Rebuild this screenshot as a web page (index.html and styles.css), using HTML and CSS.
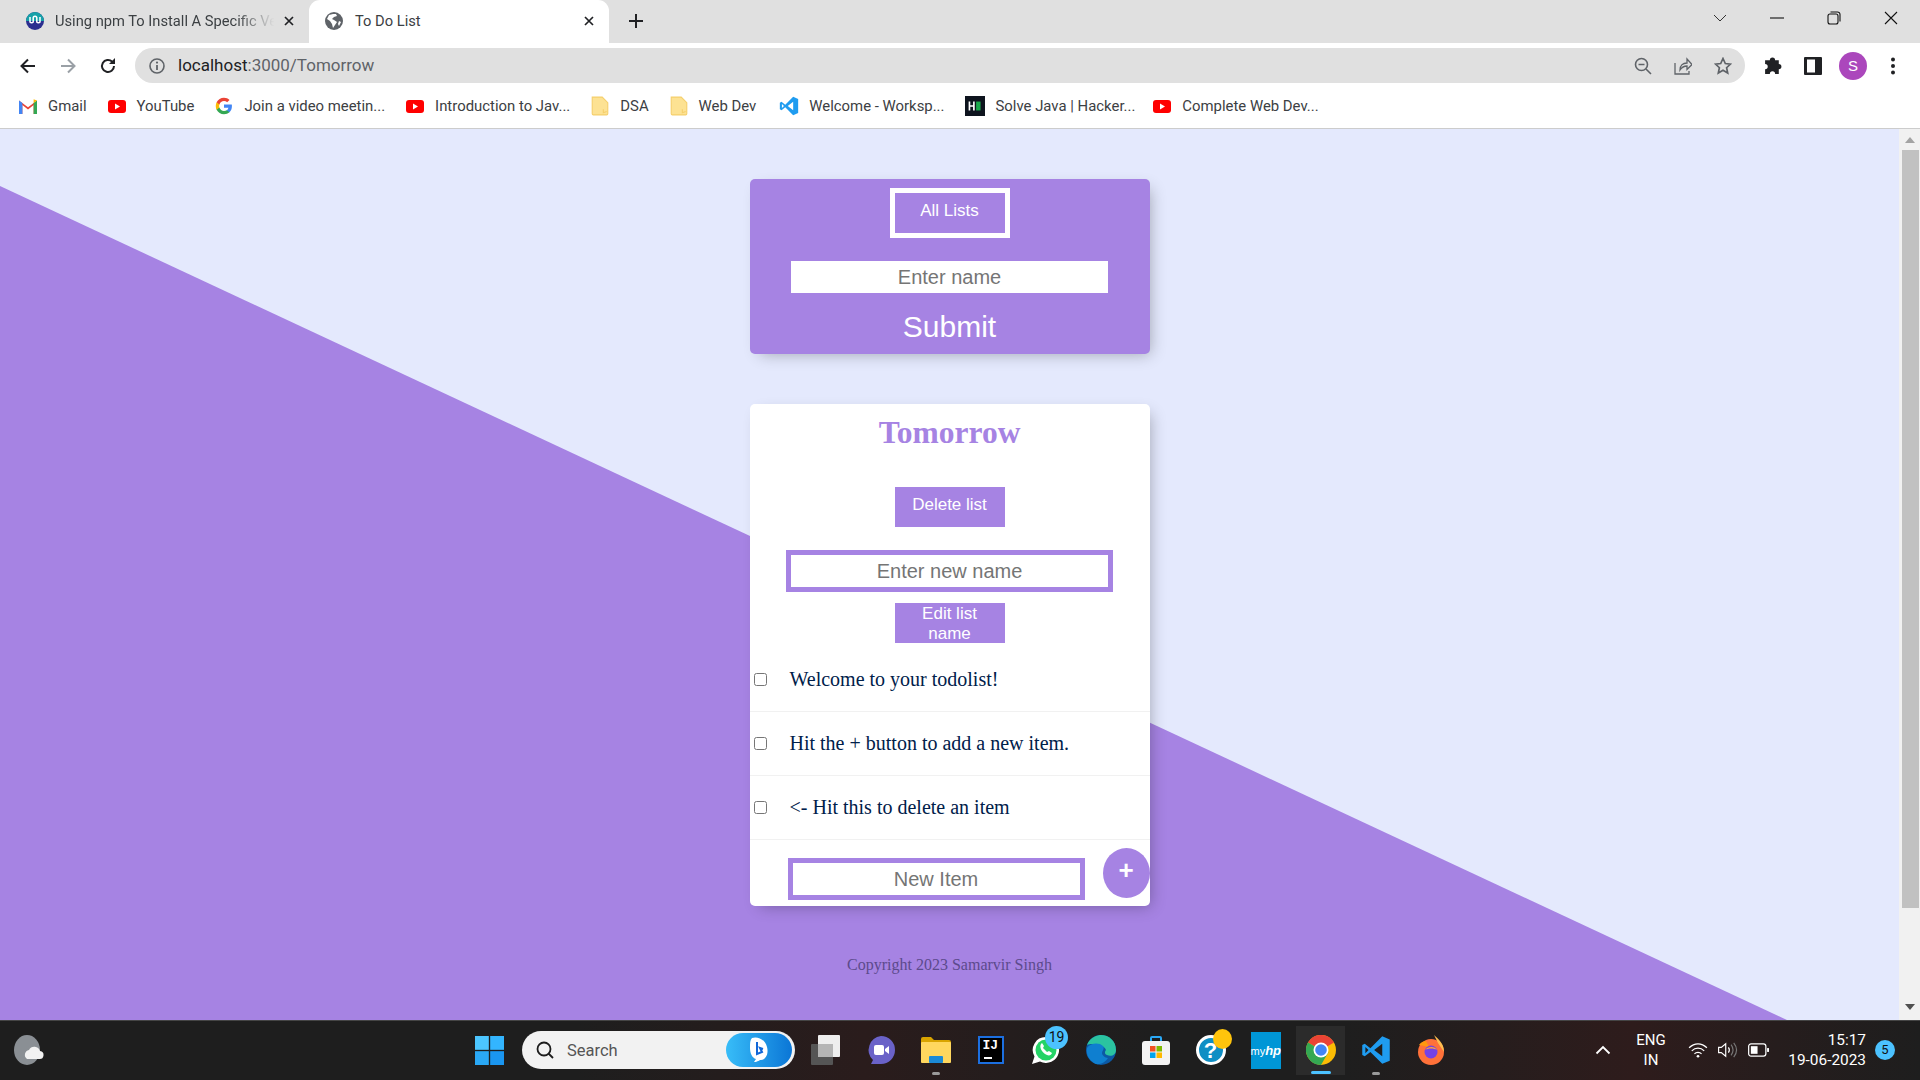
FILE: index.html
```html
<!DOCTYPE html>
<html lang="en">
<head>
<meta charset="utf-8">
<title>To Do List</title>
<link rel="stylesheet" href="styles.css">
</head>
<body>
<div class="screen">
  <header class="tabstrip">
    <div class="tab tab-idle">
      <svg class="fav" viewBox="0 0 18 18"><circle cx="9" cy="9" r="9" fill="#2b2f8f"/><path d="M0 9a9 9 0 0 1 18 0z" fill="#17a2a8"/><path d="M4 5v5a2 2 0 0 0 3.200 0V6a1.800 1.800 0 0 1 3.600 0v4a2 2 0 0 0 3.200 0V5" fill="none" stroke="#fff" stroke-width="1.500"/></svg>
      <span class="tab-title fade">Using npm To Install A Specific Ve</span>
      <svg class="tab-x" viewBox="0 0 12 12"><path d="M2 2l8 8M10 2l-8 8" stroke="#202124" stroke-width="1.700"/></svg>
    </div>
    <div class="tab tab-active">
      <svg class="fav" viewBox="0 0 18 18"><circle cx="9" cy="9" r="9" fill="#5f6368"/><path d="M8 2l-4 1-2 4 3 2 2 3 1 4 2-3 2-3-3-2-2-1 2-2 3-1-1-2zM14 9l2 1-2 4-1-2z" fill="#fff"/></svg>
      <span class="tab-title">To Do List</span>
      <svg class="tab-x" viewBox="0 0 12 12"><path d="M2 2l8 8M10 2l-8 8" stroke="#202124" stroke-width="1.700"/></svg>
    </div>
    <svg class="newtab" viewBox="0 0 16 16"><path d="M8 1v14M1 8h14" stroke="#202124" stroke-width="2"/></svg>
    <div class="winctl">
      <span class="winbtn"><svg viewBox="0 0 14 8" class="ico-chev"><path d="M1 1l6 6 6-6" fill="none" stroke="#333" stroke-width="1"/></svg></span>
      <span class="winbtn"><svg viewBox="0 0 14 2" class="ico-min"><path d="M0 1h14" stroke="#111" stroke-width="1.100"/></svg></span>
      <span class="winbtn"><svg viewBox="0 0 14 14" class="ico-res"><rect x="1" y="3" width="10" height="10" rx="2" fill="none" stroke="#111" stroke-width="1.100"/><path d="M3.500 1h7a2.500 2.500 0 0 1 2.500 2.500v7" fill="none" stroke="#111" stroke-width="1.100"/></svg></span>
      <span class="winbtn"><svg viewBox="0 0 14 14" class="ico-res"><path d="M1 1l12 12M13 1L1 13" stroke="#111" stroke-width="1.100"/></svg></span>
    </div>
  </header>

  <div class="toolbar">
    <span class="tbtn"><svg class="i18" viewBox="0 0 18 18"><path d="M16 9H3M9 2.500L2.500 9 9 15.500" fill="none" stroke="#202124" stroke-width="2"/></svg></span>
    <span class="tbtn"><svg class="i18" viewBox="0 0 18 18"><path d="M2 9h13M9 2.500L15.500 9 9 15.500" fill="none" stroke="#9aa0a6" stroke-width="2"/></svg></span>
    <span class="tbtn"><svg class="i18" viewBox="0 0 18 18"><path d="M15 9a6 6 0 1 1-1.800-4.300" fill="none" stroke="#202124" stroke-width="2"/><path d="M16 1v6h-6z" fill="#202124"/></svg></span>
    <div class="omnibox">
      <svg class="i18 info" viewBox="0 0 18 18"><circle cx="9" cy="9" r="7" fill="none" stroke="#5f6368" stroke-width="1.600"/><path d="M9 8v5" stroke="#5f6368" stroke-width="1.800"/><circle cx="9" cy="5.600" r="1.100" fill="#5f6368"/></svg>
      <span class="url">localhost<span class="url-dim">:3000/Tomorrow</span></span>
      <span class="tbtn"><svg class="i18" viewBox="0 0 18 18"><circle cx="7.500" cy="7.500" r="6" fill="none" stroke="#5f6368" stroke-width="1.600"/><path d="M4.500 7.500h6M12 12l5 5" stroke="#5f6368" stroke-width="1.600"/></svg></span>
      <span class="tbtn"><svg class="i18" viewBox="0 0 18 18"><path d="M1 6v11h14v-3M6 13c0-5 3-7 7-7V2l5 5.500-5 5V9c-3 0-5 1-7 4z" fill="none" stroke="#5f6368" stroke-width="1.300"/></svg></span>
      <span class="tbtn"><svg class="i18" viewBox="0 0 18 18"><path d="M9 1.500l2.300 5 5.200.6-3.900 3.600 1.100 5.300L9 13.300 4.300 16l1.100-5.300L1.500 7.100l5.200-.6z" fill="none" stroke="#5f6368" stroke-width="1.700"/></svg></span>
    </div>
    <span class="tbtn tbtn-first"><svg class="i18" viewBox="0 0 19 19"><path d="M2 4h4.500a2.500 2.500 0 0 1 5 0H15v3.500a2.500 2.500 0 0 1 0 5V17h-3.500a2.500 2.500 0 0 0-5 0H2v-4.500a2.500 2.500 0 0 0 0-5z" fill="#202124"/></svg></span>
    <span class="tbtn"><svg class="i18" viewBox="0 0 18 18"><rect width="18" height="18" rx="1" fill="#202124"/><rect x="3" y="2.500" width="8" height="13" fill="#fff"/></svg></span>
    <span class="tbtn"><span class="avatar">S</span></span>
    <span class="tbtn"><svg class="i18" viewBox="0 0 18 18"><circle cx="9" cy="2.500" r="2" fill="#202124"/><circle cx="9" cy="9" r="2" fill="#202124"/><circle cx="9" cy="15.500" r="2" fill="#202124"/></svg></span>
  </div>

  <nav class="bookmarks">
    <a class="bm"><svg class="bm-ico" viewBox="1 1 16 16"><path d="M1 16V4l8 6 8-6v12h-3V8l-5 4-5-4v8z" fill="#ea4335"/><path d="M1 16V4l3 2.300V16z" fill="#4285f4"/><path d="M17 16V4l-3 2.300V16z" fill="#34a853"/><path d="M14 6.300V3l3 1z" fill="#fbbc05"/></svg><span>Gmail</span></a>
    <a class="bm"><svg class="bm-ico" viewBox="0 0 18 18"><rect y="3" width="18" height="13" rx="3" fill="#f00"/><path d="M7 6.500v6l5-3z" fill="#fff"/></svg><span>YouTube</span></a>
    <a class="bm"><svg class="bm-ico" viewBox="0 0 24 24"><path fill="#4285F4" d="M22.560 12.250c0-.78-.07-1.530-.2-2.250H12v4.260h5.920c-.26 1.370-1.040 2.530-2.210 3.310v2.770h3.570c2.080-1.920 3.280-4.740 3.280-8.090z"/><path fill="#34A853" d="M12 23c2.970 0 5.460-.98 7.280-2.660l-3.570-2.770c-.98.66-2.230 1.060-3.710 1.060-2.860 0-5.290-1.930-6.160-4.530H2.180v2.840C3.990 20.530 7.700 23 12 23z"/><path fill="#FBBC05" d="M5.840 14.090c-.22-.66-.35-1.360-.35-2.090s.13-1.430.35-2.090V7.070H2.180C1.430 8.550 1 10.220 1 12s.43 3.450 1.180 4.930l3.660-2.840z"/><path fill="#EA4335" d="M12 5.380c1.620 0 3.060.56 4.210 1.640l3.150-3.150C17.450 2.090 14.970 1 12 1 7.700 1 3.990 3.470 2.180 7.070l3.660 2.840c.87-2.600 3.300-4.530 6.160-4.530z"/></svg><span>Join a video meetin...</span></a>
    <a class="bm"><svg class="bm-ico" viewBox="0 0 18 18"><rect y="3" width="18" height="13" rx="3" fill="#f00"/><path d="M7 6.500v6l5-3z" fill="#fff"/></svg><span>Introduction to Jav...</span></a>
    <a class="bm"><svg class="bm-ico folder" viewBox="0 0 16 18"><path d="M1 1h9l5 5v10a1 1 0 0 1-1 1H2a1 1 0 0 1-1-1z" fill="#fde293" stroke="#f5cf6c"/><path d="M11 12v3l3-1" fill="none" stroke="#f5cf6c"/></svg><span>DSA</span></a>
    <a class="bm"><svg class="bm-ico folder" viewBox="0 0 16 18"><path d="M1 1h9l5 5v10a1 1 0 0 1-1 1H2a1 1 0 0 1-1-1z" fill="#fde293" stroke="#f5cf6c"/><path d="M11 12v3l3-1" fill="none" stroke="#f5cf6c"/></svg><span>Web Dev</span></a>
    <a class="bm bm-vs"><svg class="bm-ico bm-wide" viewBox="0 0 24 24"><path fill-rule="evenodd" d="M17 1L7.500 10.500 3 7 1 8v8l2 1 4.500-3.500L17 23l6-2.500v-17zM17 7l-6.500 5 6.500 5zM3.500 9.500L6 12l-2.500 2.500z" fill="#1f9cf0"/></svg><span>Welcome - Worksp...</span></a>
    <a class="bm bm-hr"><svg class="bm-ico bm-wide" viewBox="0 0 18 18"><rect width="18" height="18" fill="#0e141e"/><path d="M4 5v8M8 5v8M4 9h4" stroke="#fff" stroke-width="1.500"/><rect x="10" y="5" width="4" height="8" fill="#1ba94c"/></svg><span>Solve Java | Hacker...</span></a>
    <a class="bm bm-last"><svg class="bm-ico" viewBox="0 0 18 18"><rect y="3" width="18" height="13" rx="3" fill="#f00"/><path d="M7 6.500v6l5-3z" fill="#fff"/></svg><span>Complete Web Dev...</span></a>
  </nav>

  <div class="window-body">
    <main class="viewport">
      <div class="diagonal"></div>
      <div class="page">
        <section class="card card-head">
          <button class="btn btn-all">All Lists</button>
          <input class="field field-plain" type="text" placeholder="Enter name">
          <button class="btn-submit">Submit</button>
        </section>
        <section class="card card-list">
          <h1 class="list-title">Tomorrow</h1>
          <button class="btn btn-delete">Delete list</button>
          <input class="field field-rename" type="text" placeholder="Enter new name">
          <button class="btn btn-edit">Edit list name</button>
          <div class="items">
            <label class="item"><input type="checkbox"><p>Welcome to your todolist!</p></label>
            <label class="item"><input type="checkbox"><p>Hit the + button to add a new item.</p></label>
            <label class="item"><input type="checkbox"><p>&lt;- Hit this to delete an item</p></label>
          </div>
          <form class="add-row">
            <input class="field field-new" type="text" placeholder="New Item">
            <button class="btn-add" type="button">+</button>
          </form>
        </section>
        <footer class="copyright">Copyright 2023 Samarvir Singh</footer>
      </div>
    </main>
    <aside class="scrollbar">
      <span class="arrow-up"></span>
      <span class="thumb"></span>
      <span class="arrow-down"></span>
    </aside>
  </div>

  <footer class="taskbar">
    <svg class="weather" viewBox="0 0 30 30"><ellipse cx="13" cy="15" rx="13" ry="15" fill="#8a8f94"/><path d="M13 24h12a4 4 0 0 0 1-8 6 6 0 0 0-11-1 5 5 0 0 0-2 9z" fill="#f2f2f2"/></svg>
    <svg class="winlogo" viewBox="0 0 30 30"><rect width="14.300" height="14.300" fill="#4cc6ff"/><rect x="15.700" width="14.300" height="14.300" fill="#33b5ff"/><rect y="15.700" width="14.300" height="14.300" fill="#2aa8f5"/><rect x="15.700" y="15.700" width="14.300" height="14.300" fill="#1a96f0"/></svg>
    <div class="searchbox">
      <svg class="search-ico" viewBox="0 0 20 20"><circle cx="9" cy="9" r="6.500" fill="none" stroke="#1c1c1c" stroke-width="1.800"/><path d="M13.500 13.500L18 18" stroke="#1c1c1c" stroke-width="1.800"/></svg>
      <span class="search-text">Search</span>
      <span class="bing"><svg class="bing-ico" viewBox="0 0 20 26"><path d="M3 1c5-2 13 1 15 9s-2 13-6 13c-2 0-3 2-7 2l2-3C3 21 1 16 1 11S1 3 3 1z" fill="#fff"/><path d="M8 5v12l5-2-2-4 3 1" fill="none" stroke="#1167d8" stroke-width="2"/></svg></span>
    </div>
    <div class="apps">
      <span class="app"><svg class="appi" viewBox="0 0 30 30"><rect x="0" y="9" width="22" height="21" rx="1" fill="#555"/><rect x="7" y="0" width="22" height="22" rx="1" fill="#eee"/><rect x="7" y="9" width="15" height="13" fill="#b5b5b5"/></svg></span>
      <span class="app"><svg class="appi" viewBox="0 0 30 30"><path d="M15 1a14 14 0 0 1 0 28H5l2-4A14 14 0 0 1 15 1z" fill="#6a62c8"/><rect x="8" y="10" width="10" height="10" rx="2" fill="#fff"/><path d="M19 14l4-3v8l-4-3z" fill="#fff"/></svg></span>
      <span class="app app-run"><svg class="appi" viewBox="0 0 30 30"><path d="M0 4a2 2 0 0 1 2-2h8l3 3h15a2 2 0 0 1 2 2v3H0z" fill="#d9a400"/><rect y="7" width="30" height="21" rx="1" fill="#ffd75e"/><rect x="8" y="21" width="14" height="7" rx="1" fill="#1b8ad6"/></svg></span>
      <span class="app"><span class="ij">IJ<i class="ij-bar"></i></span></span>
      <span class="app"><svg class="appi" viewBox="0 0 30 30"><path d="M15 2a13 13 0 1 1-6 24.500L1 29l2.500-7.500A13 13 0 0 1 15 2z" fill="#fff"/><circle cx="15" cy="15" r="10.500" fill="#25d366"/><path d="M10 9c-2 3 1 8 4 10s6 2 7-1l-3-2-2 1-4-4 1-2-2-3z" fill="#fff"/></svg><span class="badge-19">19</span></span>
      <span class="app"><svg class="appi" viewBox="0 0 30 30"><circle cx="15" cy="15" r="15" fill="#0c59a4"/><path d="M1 10C4 2 12 0 15 0c8 0 15 6 15 15 0 5-5 7-9 5-3-1-2-4-1-5-2-6-15-7-19-5z" fill="#2bc3a0"/><path d="M1 13c3-5 12-6 16-2 2 3-1 5-1 7s3 5 6 5c-3 5-10 8-14 5C3 25 0 20 1 13z" fill="#0f7fd0"/></svg></span>
      <span class="app"><svg class="appi" viewBox="0 0 30 30"><path d="M10 7V3a1 1 0 0 1 1-1h8a1 1 0 0 1 1 1v4" fill="none" stroke="#2aa8f5" stroke-width="2"/><rect x="1" y="6" width="28" height="24" rx="3" fill="#f3f3f3"/><rect x="9" y="11" width="5.500" height="5.500" fill="#f25022"/><rect x="15.500" y="11" width="5.500" height="5.500" fill="#7fba00"/><rect x="9" y="17.500" width="5.500" height="5.500" fill="#00a4ef"/><rect x="15.500" y="17.500" width="5.500" height="5.500" fill="#ffb900"/></svg></span>
      <span class="app"><span class="help">?</span><i class="amber"></i></span>
      <span class="app"><span class="myhp">my<em>hp</em></span></span>
      <span class="app app-active"><svg class="appi" viewBox="0 0 30 30"><circle cx="15" cy="15" r="15" fill="#fbbc04"/><path d="M15 15L2 7.500A15 15 0 0 1 28 7.500z" fill="#ea4335"/><path d="M15 15L2 7.500A15 15 0 0 0 15 30l7.500-13z" fill="#34a853"/><circle cx="15" cy="15" r="7.500" fill="#fff"/><circle cx="15" cy="15" r="5.800" fill="#4285f4"/></svg></span>
      <span class="app app-run"><svg class="appi" viewBox="0 0 24 24"><path fill-rule="evenodd" d="M17 1L7.500 10.500 3 7 1 8v8l2 1 4.500-3.500L17 23l6-2.500v-17zM17 7l-6.500 5 6.500 5zM3.500 9.500L6 12l-2.500 2.500z" fill="#1f9cf0"/></svg></span>
      <span class="app"><svg class="appi" viewBox="0 0 30 30"><circle cx="15" cy="17" r="13" fill="#ff7139"/><path d="M18 0c4 4 10 8 10 17L22 8z" fill="#ffbd4f"/><path d="M3 10c2-3 5-4 7-4l3 6z" fill="#ff980e"/><circle cx="15" cy="17" r="6.500" fill="#7542e5"/><path d="M9 15c3-4 10-4 12 0-3-2-9-2-12 0z" fill="#ffa436"/></svg></span>
    </div>
    <div class="tray">
      <svg class="caret" viewBox="0 0 16 10"><path d="M1.500 8.500L8 2l6.500 6.500" fill="none" stroke="#fff" stroke-width="1.800"/></svg>
      <span class="lang">ENG<br>IN</span>
      <svg class="tray-ico wifi" viewBox="0 0 22 18"><path d="M1 6.500c6-6 14-6 20 0M4 10c4-4 10-4 14 0M7 13.300c2-2 6-2 8 0" fill="none" stroke="#fff" stroke-width="1.400"/><circle cx="11" cy="16" r="1.500" fill="#fff"/></svg>
      <svg class="tray-ico speaker" viewBox="0 0 22 18"><path d="M1 6v6h3l5 4V2L4 6z" fill="none" stroke="#fff" stroke-width="1.300"/><path d="M12 6c1.500 2 1.500 4 0 6" fill="none" stroke="#fff" stroke-width="1.300"/><path d="M15 3c3 4 3 8 0 12M18 1c4 5 4 11 0 16" fill="none" stroke="#777" stroke-width="1.300"/></svg>
      <svg class="tray-ico battery" viewBox="0 0 22 14"><rect x=".7" y=".7" width="18" height="12.600" rx="2.500" fill="none" stroke="#fff" stroke-width="1.300"/><rect x="3" y="3" width="7" height="8" fill="#fff"/><rect x="20" y="5" width="2" height="4" fill="#fff"/></svg>
      <span class="clock">15:17<br>19-06-2023</span>
      <span class="notif">5</span>
    </div>
  </footer>
</div>
</body>
</html>
```

FILE: styles.css
```css
* { box-sizing: border-box; }
html, body { margin: 0; padding: 0; height: 100%; overflow: hidden; }
body { font-family: "Liberation Sans", Arial, sans-serif; }
.screen { width: 1920px; height: 1080px; display: flex; flex-direction: column; }

/* tab strip */
.tabstrip { height: 43px; background: #e0e0e0; display: flex; align-items: stretch; flex: none; }
.tab { width: 300px; display: flex; align-items: center; font: 14.700px Roboto, sans-serif; color: #3c4043; padding-bottom: 1px; }
.tab-idle { width: 309px; padding-left: 26px; }
.tab-active { background: #fff; border-radius: 11px 11px 0 0; padding-left: 16px; }
.tab-title { margin-left: 11px; white-space: nowrap; flex: 1; padding-bottom: 1px; }
.tab-active .tab-title { margin-left: 12px; }
.fav { width: 18px; height: 18px; flex: none; }
.fade { -webkit-mask-image: linear-gradient(90deg, #000 80%, transparent 97%); mask-image: linear-gradient(90deg, #000 80%, transparent 97%); }
.tab-x { width: 12px; height: 12px; flex: none; margin: 0 14px 0 2px; }
.newtab { width: 16px; height: 16px; margin: 13px 0 0 19px; }
.winctl { margin-left: auto; display: flex; height: 36px; padding-right: 1px; }
.winbtn { width: 57px; display: flex; align-items: center; justify-content: center; }
.ico-chev { width: 14px; height: 8px; }
.ico-min { width: 14px; height: 2px; }
.ico-res { width: 14px; height: 14px; }

/* toolbar */
.toolbar { height: 42px; background: #fff; padding: 5px 7px 2px 8px; display: flex; align-items: center; flex: none; }
.tbtn { width: 40px; height: 35px; display: flex; align-items: center; justify-content: center; flex: none; }
.tbtn-first { margin-left: 8px; }
.i18 { width: 18px; height: 18px; flex: none; }
.tbtn-first .i18 { width: 20px; height: 20px; }
.omnibox { flex: 1; height: 35px; margin-left: 7px; background: #e0e0e0; border-radius: 18px; padding: 0 2px 0 13px; display: flex; align-items: center; }
.url { flex: 1; margin-left: 12px; padding-bottom: 1px; font: 17px Roboto, sans-serif; color: #202124; }
.url-dim { color: #5f6368; }
.avatar { width: 28px; height: 28px; border-radius: 50%; background: #ab47bc; color: #fff; font: 15px/28px "Liberation Sans", sans-serif; text-align: center; }

/* bookmarks */
.bookmarks { height: 44px; background: #fff; border-bottom: 1px solid #ccc; padding: 0 0 1px 19px; display: flex; align-items: center; gap: 21px; flex: none; font: 14.900px Roboto, sans-serif; color: #3c4043; }
.bm { display: flex; align-items: center; gap: 11px; white-space: nowrap; }
.bm-vs { margin-left: 3px; }
.bm-hr { margin-left: 1px; }
.bm-last { margin-left: -3px; }
.bm-ico { width: 18px; height: 18px; flex: none; }
.folder { height: 20px; }
.bm-wide { width: 20px; height: 20px; margin: 0 -1px; }

/* page */
.window-body { height: 891px; display: flex; flex: none; }
.viewport { flex: 1; position: relative; overflow: hidden; background: #e4e9fd; }
.diagonal { position: absolute; inset: 0; background: #a683e3; clip-path: polygon(0 57px, 1787px 891px, 0 891px); }
.page { position: relative; display: flex; flex-direction: column; align-items: center; padding-top: 50px; }
.card { width: 400px; border-radius: 5px; box-shadow: 5px 5px 15px -5px rgba(0, 0, 0, .3); display: flex; flex-direction: column; align-items: center; }
.card-head { height: 175px; background: #a683e3; padding-top: 9px; }
.card-list { height: 502px; background: #fff; margin-top: 50px; padding-top: 11px; }
.btn { display: block; background: #a683e3; color: #fff; border: 0; font: 17px/20px "Liberation Sans", sans-serif; padding: 0 15px; flex: none; }
.btn-all { width: 120px; height: 50px; border: 5px solid #fff; padding-bottom: 4px; }
.btn-delete { width: 110px; height: 40px; margin-top: 36px; padding-bottom: 5px; }
.btn-edit { width: 110px; height: 40px; margin-top: 11px; padding-top: 1px; }
.field { display: block; flex: none; background: #fff; text-align: center; font: 20px "Liberation Sans", sans-serif; color: #333; outline: 0; padding: 0; }
.field-plain { width: 317px; height: 32px; margin-top: 23px; border: 0; }
.field-rename { width: 327px; height: 42px; margin-top: 23px; border: 5px solid #a683e3; }
.field-new { width: 297px; height: 42px; margin: 18px 0 0 38px; border: 5px solid #a683e3; }
.btn-submit { background: none; border: 0; padding: 0; margin-top: 14px; height: 40px; color: #fff; font: 30px/40px "Liberation Sans", sans-serif; }
.list-title { margin: 0; font: bold 31.500px/36px "Liberation Serif", serif; color: #a683e3; }
.items { width: 100%; margin-top: 5px; }
.item { height: 64px; display: flex; align-items: center; border-bottom: 1px solid #f1f1f1; }
.item input { width: 13px; height: 13px; margin: 0 23px 0 4px; flex: none; }
.item p { margin: 0; font: 20px "Liberation Serif", serif; color: #00204a; }
.add-row { width: 100%; display: flex; align-items: flex-start; }
.btn-add { width: 47px; height: 50px; margin: 8px 0 0 18px; border: 0; padding: 0 0 6px; border-radius: 50%; background: #a683e3; color: #fff; font: bold 26px "Liberation Sans", sans-serif; }
.copyright { margin-top: 50px; font: 16px/18px "Liberation Serif", serif; color: #5c4a8c; }

/* scrollbar */
.scrollbar { width: 21px; background: #f1f1f1; display: flex; flex-direction: column; align-items: center; flex: none; padding-left: 1px; }
.arrow-up { width: 0; height: 0; margin-top: 8px; border: 5px solid transparent; border-top: 0; border-bottom: 6px solid #a3a3a3; }
.thumb { width: 17px; height: 758px; margin-top: 7px; background: #c1c1c1; }
.arrow-down { width: 0; height: 0; margin-top: 96px; border: 5px solid transparent; border-bottom: 0; border-top: 6px solid #505050; }

/* taskbar */
.taskbar { height: 60px; flex: none; border-top: 1px solid #454545; background: linear-gradient(90deg, #1e1e1e 0, #1e1e1e 30%, #2a1c1c 45%, #1e1e1e 60%, #1e1e1e 70%, #2e1c1c 85%, #1e1e1e 100%); display: flex; align-items: center; color: #fff; padding-bottom: 1px; }
.weather { width: 30px; height: 30px; margin-left: 14px; flex: none; }
.winlogo { width: 29px; height: 29px; margin-left: 431px; flex: none; }
.searchbox { width: 273px; height: 38px; margin-left: 18px; background: #f2f2f2; border-radius: 19px; display: flex; align-items: center; padding: 0 3px 0 13px; flex: none; }
.search-ico { width: 20px; height: 20px; flex: none; }
.search-text { font: 16.500px Roboto, sans-serif; color: #555; margin-left: 12px; flex: 1; }
.bing { width: 66px; height: 34px; border-radius: 17px; background: linear-gradient(90deg, #38bdf8, #0b76d6); display: flex; align-items: center; justify-content: center; }
.bing-ico { width: 20px; height: 26px; }
.apps { display: flex; margin-left: 3px; flex: none; }
.app { width: 55px; height: 49px; position: relative; display: flex; align-items: center; justify-content: center; flex: none; }
.appi { width: 30px; height: 30px; }
.app-run::after { content: ""; position: absolute; left: 50%; bottom: 0; margin-left: -4px; width: 8px; height: 3px; border-radius: 2px; background: #9a9a9a; }
.app-active { background: linear-gradient(#2b2b2b, #2b2b2b) center / 49px 49px no-repeat; }
.app-active::after { content: ""; position: absolute; left: 50%; bottom: 1px; margin-left: -10px; width: 20px; height: 3px; border-radius: 2px; background: #4cc2ff; }
.ij { position: relative; display: block; width: 26px; height: 28px; background: #000; border: 2px solid #1c6fe0; font: bold 13px/15px "Liberation Mono", monospace; color: #fff; padding-left: 3px; }
.ij-bar { position: absolute; left: 4px; bottom: 3px; width: 8px; height: 2px; background: #fff; }
.badge-19 { position: absolute; left: 27px; top: 0; width: 23px; height: 23px; border-radius: 50%; background: #4cc2ff; color: #111; font: 14px/23px Roboto, sans-serif; text-align: center; }
.help { width: 30px; height: 30px; border-radius: 50%; border: 3px solid #fff; background: #0e8ec4; color: #fff; font: bold 22px/25px "Liberation Sans", sans-serif; text-align: center; }
.amber { position: absolute; left: 30px; top: 3px; width: 19px; height: 20px; border-radius: 50%; background: #ffc40c; }
.myhp { display: block; width: 30px; height: 37px; background: #0096d6; color: #fff; font: 11px/37px "Liberation Sans", sans-serif; text-align: center; white-space: nowrap; }
.myhp em { font-size: 13px; font-weight: bold; }
.tray { margin-left: auto; display: flex; align-items: center; padding-right: 25px; flex: none; }
.caret { width: 16px; height: 10px; flex: none; }
.lang { width: 40px; margin-left: 20px; text-align: center; font: 15px/20px Roboto, sans-serif; }
.tray-ico { flex: none; }
.wifi { width: 20px; height: 16px; margin-left: 17px; }
.speaker { width: 21px; height: 16px; margin-left: 9px; }
.battery { width: 21px; height: 14px; margin-left: 10px; }
.clock { width: 99px; margin-left: -2px; text-align: right; font: 15.400px/20px Roboto, sans-serif; }
.notif { width: 20px; height: 20px; margin-left: 9px; border-radius: 50%; background: #4cc2ff; color: #111; text-align: center; font: 13px/20px Roboto, sans-serif; }
```
